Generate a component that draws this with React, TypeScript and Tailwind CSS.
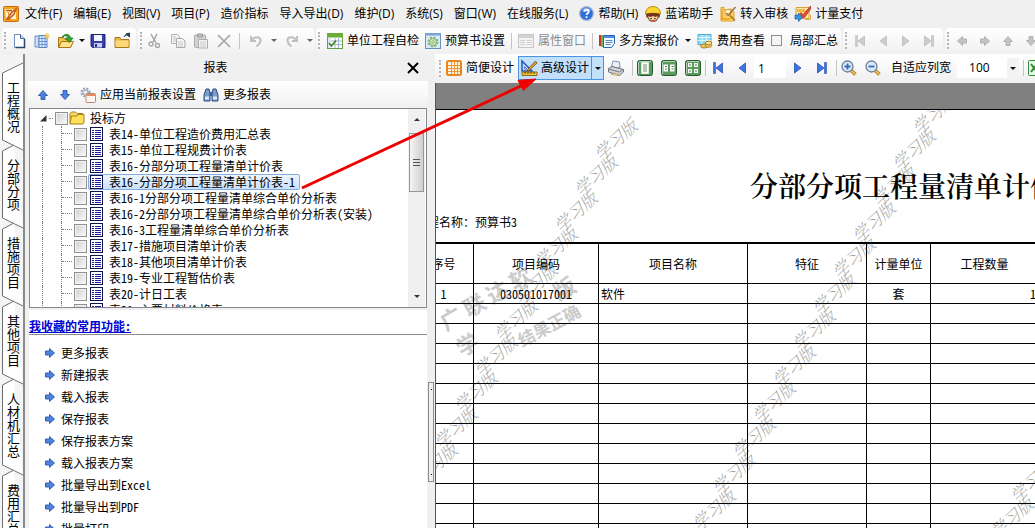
import * as React from "react";
import { clsx } from "clsx";

const menusLeft = ["文件(F)", "编辑(E)", "视图(V)", "项目(P)", "造价指标", "导入导出(D)", "维护(D)", "系统(S)", "窗口(W)", "在线服务(L)"];

const sideTabs = ["工程概况", "分部分项", "措施项目", "其他项目", "人材机汇总", "费用汇总"];

const reports = [
  "表14-单位工程造价费用汇总表",
  "表15-单位工程规费计价表",
  "表16-分部分项工程量清单计价表",
  "表16-分部分项工程量清单计价表-1",
  "表16-1分部分项工程量清单综合单价分析表",
  "表16-2分部分项工程量清单综合单价分析表(安装)",
  "表16-3工程量清单综合单价分析表",
  "表17-措施项目清单计价表",
  "表18-其他项目清单计价表",
  "表19-专业工程暂估价表",
  "表20-计日工表",
  "表21-主要材料价格表",
];

const favorites = ["更多报表", "新建报表", "载入报表", "保存报表", "保存报表方案", "载入报表方案", "批量导出到Excel", "批量导出到PDF", "批量打印"];

// Each run of stamps goes down-left across the sheet: start point and count
const stampRuns = [
  { x: 602, y: 151, count: 10 },
  { x: 920, y: 125, count: 12 },
  { x: 1018, y: 493, count: 2 },
];

interface IconProps {
  children: React.ReactNode;
  className?: string;
  box?: string;
}

function Icon({ children, className = "size-4", box = "0 0 16 16" }: IconProps) {
  return (
    <svg viewBox={box} className={clsx("shrink-0 overflow-visible", className)} fill="none" aria-hidden="true">
      {children}
    </svg>
  );
}

const AppIcon = () => (
  <Icon>
    <rect x=".5" y=".5" width="15" height="15" rx="1" fill="#f6a81c" stroke="#c96a10" />
    <path d="M2 3h8l3 2v8H3z" fill="#fff3d6" />
    <path d="M3 4.500h6M4 13l5-7 4-3-2 5-5 5z" stroke="#c2540f" strokeWidth="1.500" />
    <path d="M5 6l2 6M11 3l3 1" stroke="#d97b13" />
  </Icon>
);

const NewIcon = () => (
  <Icon>
    <path d="M3.500 1.500h6l4 4v9h-10z" fill="#fdfeff" stroke="#6f8fb8" />
    <path d="M13.500 6v8.500h-9" stroke="#27476f" strokeWidth="1.500" />
    <path d="M9.500 1.500v4h4" fill="#c4d8f0" stroke="#466b98" />
  </Icon>
);

const NewBookIcon = () => (
  <Icon>
    <path d="M1 3h4v11H1z" fill="#cfe0f7" stroke="#6d8ec4" />
    <path d="M5 2.500h8v12H5z" fill="#e4effd" stroke="#5c83c3" />
    <path d="M5 5.500h8M5 8.500h8M5 11.500h8M8 3v11M11 3v11" stroke="#6f95d2" />
    <path d="M13 0v6M10 3h6M11 1l4 4M15 1l-4 4" stroke="#f4c543" />
  </Icon>
);

const OpenIcon = () => (
  <Icon>
    <path d="M.5 14V4.500h5l1.500 2h6V14z" fill="#f2c14c" stroke="#a8781d" />
    <path d="M.5 14.500l3-6h12l-3 6z" fill="#ffe28c" stroke="#a8781d" />
    <path d="M4 4.500C6 0 12 .5 12.500 5H15l-3.800 4.500L7.500 5H10C9.500 2.500 6.500 2 4 4.500z" fill="#35a632" stroke="#18701c" strokeWidth=".7" />
  </Icon>
);

const SaveIcon = () => (
  <Icon>
    <path d="M1 1.500h14v13H2.500L1 13z" fill="#3a3fae" stroke="#20246f" />
    <path d="M4 2h8v6H4z" fill="#f3f5ff" />
    <path d="M4 10h8v4.500H4z" fill="#c9cdee" />
    <path d="M5 11h2v3H5z" fill="#2b2f8c" />
  </Icon>
);

const FolderOutIcon = () => (
  <Icon>
    <path d="M1 14.500v-10h5l1 2h8v8z" fill="#e9b545" stroke="#a77719" />
    <path d="M1.500 14V7.500h13V14z" fill="#ffd67a" />
    <path d="M10 4c1-2 2-3 5-3M15.500 0v4L12 1z" stroke="#2d3d55" fill="#2d3d55" />
  </Icon>
);

const CutIcon = () => (
  <Icon>
    <path d="M4 1l5 9M10 1L6 9" stroke="#a5a5a5" strokeWidth="1.500" />
    <circle cx="4" cy="11" r="2" stroke="#a5a5a5" strokeWidth="1.300" />
    <circle cx="10.500" cy="12.500" r="2" stroke="#a5a5a5" strokeWidth="1.300" />
  </Icon>
);

const CopyIcon = () => (
  <Icon>
    <path d="M1.500 1.500h6l2 2v7h-8z" fill="#f1f1f1" stroke="#b4b4b4" />
    <path d="M6.500 5.500h6l2.500 2.500v6.500H6.500z" fill="#f6f6f6" stroke="#a9a9a9" />
    <path d="M8 9h5M8 11h5M8 13h5M3 4h3M3 6h3M3 8h3" stroke="#c6c6c6" />
  </Icon>
);

const PasteIcon = () => (
  <Icon>
    <rect x="1.500" y="2" width="11" height="12.500" rx="1" fill="#d3d3d3" stroke="#ababab" />
    <path d="M4.500 1h5v3h-5z" fill="#bdbdbd" stroke="#a0a0a0" />
    <path d="M5.500 6.500h9v8.500h-9z" fill="#f4f4f4" stroke="#ababab" />
    <path d="M7 9h6M7 11h6M7 13h6" stroke="#c9c9c9" />
  </Icon>
);

const DeleteIcon = () => (
  <Icon>
    <path d="M2 2l12 12M14 2L2 14" stroke="#a4a4a4" strokeWidth="1.600" />
  </Icon>
);

const UndoIcon = ({ flip = false }: { flip?: boolean }) => (
  <Icon className={flip ? "size-4 -scale-x-100" : "size-4"}>
    <path d="M3 3v5h5" stroke="#bcbcbc" strokeWidth="1.800" />
    <path d="M3.500 7.500C6 3.500 12 3 12.500 7c.2 2.500-1.500 4.500-4 6.500" stroke="#c1c1c1" strokeWidth="2.200" />
  </Icon>
);

const CheckTableIcon = () => (
  <Icon>
    <rect x=".5" y=".5" width="15" height="15" fill="#fff" stroke="#6a9a45" />
    <path d="M0 0h16v4.500H0z" fill="#6cae35" />
    <path d="M1 8h14M1 11.500h14M8 5v10M11.500 5v10" stroke="#9db6cf" />
    <path d="M1 5h3v10H1z" fill="#dce8f4" />
    <path d="M2 10l2.500 3L9 7.500" stroke="#3f8a1c" strokeWidth="1.700" />
  </Icon>
);

const GearPageIcon = () => (
  <Icon>
    <rect x=".5" y=".5" width="15" height="15" fill="#dbeafb" stroke="#6b90bd" />
    <path d="M0 0h16v2.500H0z" fill="#7ba2d2" />
    <circle cx="8" cy="9" r="4.500" stroke="#86b46c" strokeWidth="2" strokeDasharray="2.200 1.300" />
    <circle cx="8" cy="9" r="3.400" fill="#d8efc8" stroke="#86b46c" />
    <circle cx="8" cy="9" r="1.300" fill="#fff" stroke="#86b46c" />
  </Icon>
);

const PropsIcon = () => (
  <Icon>
    <rect x=".5" y="1.500" width="15" height="13" fill="#f3f3f3" stroke="#c6c6c6" />
    <path d="M1 2h14v3H1z" fill="#d2d2d2" />
    <path d="M2 7.500h5M2 9.500h5M2 11.500h5M8.500 7.500H14M8.500 9.500H14M8.500 11.500h5.500" stroke="#d0d0d0" />
  </Icon>
);

const PlansIcon = () => (
  <Icon>
    <path d="M1 2v11" stroke="#c83322" strokeWidth="2" />
    <path d="M3 2v12" stroke="#45a53b" strokeWidth="1.600" />
    <path d="M4.500 2.500h11v8l-3 4h-8z" fill="#f2f8ff" stroke="#2563bd" />
    <path d="M5 3h10v2H5z" fill="#4e8fe3" />
    <path d="M6.500 7.500h7M6.500 9.500h7M6.500 11.500h5" stroke="#5e86b9" />
  </Icon>
);

const CostIcon = () => (
  <Icon>
    <path d="M1 1.500h13v10H1z" fill="#8fdcf4" stroke="#4fa7cb" />
    <path d="M1 4.500h13M1 7.500h13M5 2v9M9.500 2v9" stroke="#d8f4fc" />
    <ellipse cx="7" cy="13" rx="3.500" ry="2" fill="#f0c75c" stroke="#a98227" />
    <ellipse cx="11.500" cy="12.500" rx="3.300" ry="1.800" fill="#f0c75c" stroke="#a98227" />
    <ellipse cx="11.500" cy="10" rx="3.300" ry="1.800" fill="#ffe08a" stroke="#a98227" />
  </Icon>
);

const HelpIcon = () => (
  <Icon className="size-[15px]">
    <circle cx="8" cy="8" r="7.300" fill="#2e6fd9" stroke="#a3b7d6" strokeWidth="1.400" />
    <path d="M3 5a5.500 5.500 0 0 1 10 0c-3 2-7 2-10 0z" fill="#6fa2f0" />
    <path d="M5.700 6.200C5.700 3 10.300 3 10.300 6c0 1.800-2.200 1.800-2.200 3.600M8 11v1.800" stroke="#fff" strokeWidth="1.900" />
  </Icon>
);

const HelperIcon = () => (
  <Icon>
    <path d="M3 8h10v4l-2 3H5l-2-3z" fill="#f7cfa2" stroke="#77451c" />
    <path d="M.5 8c0-10 15-10 15 0-4-1-11-1-15 0z" fill="#ffd42c" stroke="#b68712" />
    <path d="M1 8c4-1.500 10-1.500 14 0l-.5 4-2-2-2 1-2.500-1-2.500 1-2-1-2 2z" fill="#74371a" />
    <path d="M6 12v1.300M10 12v1.300" stroke="#2e1b10" strokeWidth="1.300" />
    <path d="M6.500 15h3" stroke="#d0432c" strokeWidth="1.500" />
  </Icon>
);

const AuditIcon = () => (
  <Icon>
    <path d="M1 1.500h3V4l7-1 3 3v9H1z" fill="#ffd559" stroke="#dfa02a" />
    <path d="M2 12c4 2 8 1 11-1M2 3v11" stroke="#ef9f27" strokeWidth="1.500" />
    <circle cx="8" cy="6.500" r="3.300" fill="#fff4cf" stroke="#d0a03b" />
    <path d="M15.500 1L8.500 9 6 7M10 9.500l5 5" stroke="#9a7440" strokeWidth="1.500" />
  </Icon>
);

const PayIcon = () => (
  <Icon>
    <path d="M1 1.500h13v11H1z" fill="#ffe9b5" stroke="#d9a13d" />
    <path d="M2 3h8v3H2z" fill="#f4b54b" />
    <path d="M15.500 0L8 8.500l-2-2-1 1L7.500 12 10 11l5.500-8z" fill="#e3502c" stroke="#a32b12" strokeWidth=".7" />
    <path d="M10 13.500h5.500V9" stroke="#e1aa53" />
    <path d="M0 9h3.500V7l4 4.500-4 4V13H0z" fill="#3c93df" stroke="#1c5e9f" strokeWidth=".7" />
  </Icon>
);

const GridIcon = () => (
  <Icon>
    <rect x="1" y="1" width="14" height="14" rx="1.500" fill="#fff4e2" stroke="#e88722" strokeWidth="2" />
    <path d="M2 5.500h12M2 8.500h12M2 11.500h12M5.500 2v12M8.500 2v12M11.500 2v12" stroke="#eb9638" />
  </Icon>
);

const DesignIcon = () => (
  <Icon>
    <path d="M1 1v10h10z" fill="#cfe0ff" stroke="#2a55bb" strokeWidth="1.500" />
    <path d="M3.500 6.500v2.500H6z" fill="#fff" stroke="#2a55bb" strokeWidth=".7" />
    <path d="M14.500 1L7 9l-1 2.500L8.500 10 16 3z" fill="#e1a13d" stroke="#6f4a16" strokeWidth=".8" />
    <path d="M1 12h15v3.500H1z" fill="#f2c639" stroke="#8b6a12" />
    <path d="M4 12v2M7 12v2M10 12v2M13 12v2" stroke="#5d470b" />
  </Icon>
);

const PrinterIcon = () => (
  <Icon>
    <path d="M3.500 7L5 1l6.500 1L12 8z" fill="#e9f1fb" stroke="#8393a6" />
    <path d="M.5 8.500L4 6.500l11.500 3V12l-4 3.500L.5 12z" fill="#d4d6da" stroke="#70757d" />
    <path d="M.5 9l11 3 4-2.500" stroke="#70757d" />
    <path d="M3 14l3-1 5 1.500-2 1z" fill="#fff4c4" stroke="#9b8a4a" strokeWidth=".7" />
  </Icon>
);

const GreenPage = ({ children }: { children: React.ReactNode }) => (
  <Icon>
    <rect x=".5" y=".5" width="15" height="15" rx="2" fill="#5b9a5e" stroke="#28582c" />
    <path d="M1.500 14V2.500l1-1H14" stroke="#b4d8b4" />
    {children}
  </Icon>
);

const ZoomIcon = ({ plus = false }: { plus?: boolean }) => (
  <Icon>
    <path d="M9.500 10l5 4.500" stroke="#8a6420" strokeWidth="3.400" />
    <path d="M10 10.500l4.500 4" stroke="#f2c443" strokeWidth="2" />
    <circle cx="6.500" cy="6.500" r="5.500" fill="#d7e8fb" stroke="#6f7f95" strokeWidth="1.300" />
    <path d={plus ? "M3.500 6.500h6M6.500 3.500v6" : "M3.500 6.500h6"} stroke="#3a6bb4" strokeWidth="1.800" />
  </Icon>
);

const ApplyIcon = () => (
  <Icon>
    <circle cx="5.500" cy="5.500" r="4" stroke="#98a6b8" strokeWidth="2.200" strokeDasharray="2 1.200" />
    <circle cx="5.500" cy="5.500" r="2.500" fill="#edf1f6" stroke="#8b9aad" />
    <rect x="6" y="6.500" width="9.500" height="9" rx="1" fill="#fdf6f0" stroke="#b98a72" />
    <path d="M6.500 7h8.500v2H6.500z" fill="#e78a5a" />
  </Icon>
);

const BinocularsIcon = () => (
  <Icon>
    <path d="M3 2h3l1 4v8H1V8zM13 2h-3L9 6v8h6V8z" fill="#7d9cc7" stroke="#2a4d84" />
    <path d="M6.500 5h3v4h-3z" fill="#3d649f" />
    <path d="M2 9.500h4v3H2zM10 9.500h4v3h-4z" fill="#dce8f8" />
  </Icon>
);

const FolderIcon = () => (
  <Icon className="h-3.5 w-4" box="0 0 16 14">
    <path d="M1 12.500V2.500L2.500 1h4L8 2.500h5.500v3" fill="#f7d768" stroke="#a98112" />
    <path d="M1 13l1.500-8H8l1-1.500h6V11l-1 2z" fill="#ffdf5e" stroke="#a98112" />
  </Icon>
);

const SheetIcon = () => (
  <Icon className="h-3.5 w-[13px]" box="0 0 13 14">
    <rect x=".5" y=".5" width="12" height="13" fill="#fff" stroke="#10104e" />
    <path d="M2 3.500h2M2 5.500h2M2 7.500h2M2 9.500h2M2 11.500h2M5 3.500h6M5 5.500h6M5 7.500h6M5 9.500h6M5 11.500h6" stroke="#20209a" />
  </Icon>
);

const turns = { right: "", left: "rotate-180", up: "-rotate-90", down: "rotate-90" };

// Block arrow used by the tree toolbar, the favorites list and the greyed move buttons
function BlockArrow({ dir, muted = false }: { dir: keyof typeof turns; muted?: boolean }) {
  return (
    <Icon className={clsx("size-2.5", turns[dir])} box="0 0 10 10">
      <path
        d="M.5 3h4V.5L9.500 5l-5 4.500V7h-4z"
        fill={muted ? "#c4c4c4" : "#4f83e0"}
        stroke={muted ? "#adadad" : "#2b55a8"}
        strokeWidth=".9"
      />
    </Icon>
  );
}

function NavArrow({ dir, stop = false, muted = false }: { dir: "left" | "right"; stop?: boolean; muted?: boolean }) {
  const color = muted ? "#cccccc" : "#3f74e0";
  const edge = muted ? "#bdbdbd" : "#2450b0";
  return (
    <Icon className={clsx("h-3 w-2.5", turns[dir])} box="0 0 10 12">
      <path d={stop ? "M.5 1L7 6 .5 11z" : "M1.500 1L8 6l-6.500 5z"} fill={color} stroke={edge} strokeWidth=".8" />
      {stop && <path d="M7.500.5h2v11h-2z" fill={color} stroke={edge} strokeWidth=".6" />}
    </Icon>
  );
}

const Caret = ({ color = "#111" }: { color?: string }) => (
  <Icon className="h-[3px] w-[6px]" box="0 0 6 3">
    <path d="M0 0h6L3 3z" fill={color} />
  </Icon>
);

const Grip = () => <span className="h-[17px] w-[3px] shrink-0 border-l-2 border-dotted border-[#b5b5b5]" />;
const Sep = () => <span className="h-4 w-px shrink-0 bg-[#c4c4c4]" />;

interface ToolProps {
  label: string;
  width?: string;
  children: React.ReactNode;
}

function Tool({ label, width = "w-6", children }: ToolProps) {
  return (
    <button type="button" aria-label={label} className={clsx("flex h-6 shrink-0 items-center justify-center", width)}>
      {children}
    </button>
  );
}

function TextTool({ icon, children, className = "" }: { icon?: React.ReactNode; children: React.ReactNode; className?: string }) {
  return (
    <button type="button" className={clsx("flex shrink-0 items-center gap-1 whitespace-nowrap", className)}>
      {icon}
      {children}
    </button>
  );
}

function ToolGroup({ children, className = "" }: { children: React.ReactNode; className?: string }) {
  return (
    <div className={clsx("flex h-[26px] shrink-0 items-center rounded bg-linear-to-b from-white to-[#f0f0f0] pl-0.5", className)}>
      {children}
    </div>
  );
}

function MenuBar() {
  return (
    <nav className="flex h-[27px] shrink-0 items-center gap-[11px] whitespace-nowrap pl-[3px]">
      <div className="flex items-center gap-1.5">
        <AppIcon />
        <button type="button">{menusLeft[0]}</button>
      </div>
      {menusLeft.slice(1).map((m) => (
        <button type="button" key={m}>{m}</button>
      ))}
      <div className="flex items-center gap-[7px]">
        <TextTool icon={<HelpIcon />}>帮助(H)</TextTool>
        <TextTool icon={<HelperIcon />}>蓝诺助手</TextTool>
        <TextTool icon={<AuditIcon />}>转入审核</TextTool>
        <TextTool icon={<PayIcon />}>计量支付</TextTool>
      </div>
    </nav>
  );
}

function MainToolbar() {
  return (
    <div className="flex h-[27px] shrink-0 items-center gap-0.5 pl-0.5">
      <ToolGroup className="w-[134px]">
        <Grip />
        <Tool label="新建" width="w-[23px]"><NewIcon /></Tool>
        <Tool label="新建项目"><NewBookIcon /></Tool>
        <Tool label="打开"><OpenIcon /></Tool>
        <Tool label="最近文件" width="w-2"><Caret /></Tool>
        <Tool label="保存"><SaveIcon /></Tool>
        <Tool label="另存为"><FolderOutIcon /></Tool>
      </ToolGroup>
      <ToolGroup className="w-[176px]">
        <Grip />
        <Tool label="剪切" width="w-[23px]"><CutIcon /></Tool>
        <Tool label="复制" width="w-[23px]"><CopyIcon /></Tool>
        <Tool label="粘贴" width="w-[23px]"><PasteIcon /></Tool>
        <Tool label="删除" width="w-[23px]"><DeleteIcon /></Tool>
        <span className="mx-1 flex"><Sep /></span>
        <Tool label="撤销"><UndoIcon /></Tool>
        <Tool label="撤销列表" width="w-3"><Caret color="#666" /></Tool>
        <Tool label="恢复"><UndoIcon flip /></Tool>
        <Tool label="恢复列表" width="w-3"><Caret color="#666" /></Tool>
      </ToolGroup>
      <ToolGroup className="w-[525px] gap-1.5">
        <Grip />
        <TextTool icon={<CheckTableIcon />}>单位工程自检</TextTool>
        <TextTool icon={<GearPageIcon />}>预算书设置</TextTool>
        <Sep />
        <TextTool icon={<PropsIcon />} className="text-[#8d8d8d]">属性窗口</TextTool>
        <Sep />
        <TextTool icon={<PlansIcon />}>
          多方案报价
          <span className="flex w-2 justify-end"><Caret /></span>
        </TextTool>
        <TextTool icon={<CostIcon />}>费用查看</TextTool>
        <label className="flex items-center gap-2 whitespace-nowrap">
          <input type="checkbox" className="size-[11px] appearance-none border border-[#8e8f8f] bg-[#f4f4f4]" />
          局部汇总
        </label>
      </ToolGroup>
      <ToolGroup className="w-[100px]">
        <Grip />
        <Tool label="首条" width="w-[23px]"><NavArrow dir="left" stop muted /></Tool>
        <Tool label="上一条" width="w-[23px]"><NavArrow dir="left" muted /></Tool>
        <Tool label="下一条" width="w-[23px]"><NavArrow dir="right" muted /></Tool>
        <Tool label="末条" width="w-[23px]"><NavArrow dir="right" stop muted /></Tool>
      </ToolGroup>
      <ToolGroup>
        <Grip />
        <Tool label="左移" width="w-[23px]"><BlockArrow dir="left" muted /></Tool>
        <Tool label="右移" width="w-[23px]"><BlockArrow dir="right" muted /></Tool>
        <Tool label="上移" width="w-[23px]"><BlockArrow dir="up" muted /></Tool>
        <Tool label="下移" width="w-[23px]"><BlockArrow dir="down" muted /></Tool>
      </ToolGroup>
    </div>
  );
}

function SideTab({ name, first }: { name: string; first: boolean }) {
  const h = name.length * 13 + 26;
  return (
    <button type="button" className="relative flex w-full flex-col items-center py-[13px] pl-1 text-[13px] leading-[13px]">
      <svg className="absolute left-0 top-0 h-full w-full overflow-visible" fill="#fff" stroke="#6e6e6e" aria-hidden="true">
        <path d={`M${first ? "23 -4" : "14 0"} L2.500 6 V${h - 5} L23 ${h + 5}`} />
      </svg>
      {[...name].map((c, i) => (
        <span key={i} className="relative">{c}</span>
      ))}
    </button>
  );
}

const boxStyle = "size-[13px] shrink-0 appearance-none border border-[#8e8f8f] bg-linear-to-br from-[#cfcfcf] to-[#fbfbfb] shadow-[inset_0_0_0_1px_#f4f4f4]";

function ReportTree() {
  const [selected, setSelected] = React.useState(3);
  return (
    <div className="mx-px flex h-[200px] shrink-0 border border-[#828790] bg-white">
      <ul className="min-w-0 flex-1 overflow-hidden whitespace-nowrap pt-px font-['Noto_Sans_Mono_CJK_SC','Noto_Sans_CJK_SC',sans-serif]">
        <li className="flex h-4 items-center pl-2.5">
          <Icon className="size-[7px]" box="0 0 7 7"><path d="M6.500 0v6.500H0z" fill="#333" /></Icon>
          <span className="mx-0.5 w-1 border-b border-dotted border-[#808080]" />
          <input id="root" type="checkbox" className={boxStyle} />
          <label htmlFor="root" className="flex items-center gap-[5px] pl-px"><FolderIcon />投标方</label>
        </li>
        {reports.map((name, i) => (
          <li key={name} className="flex h-4 items-center">
            <span className="ml-3 h-4 w-[19px] border-l border-dotted border-[#808080]" />
            <span className="mr-0.5 h-4 w-[11px] border-l border-dotted border-[#808080]">
              <span className="block h-2 border-b border-dotted border-[#808080]" />
            </span>
            <input type="checkbox" aria-label={name} className={boxStyle} />
            <button
              type="button"
              onClick={() => setSelected(i)}
              className={clsx(
                "ml-px flex h-4 items-center gap-1.5 rounded-xs border pl-px pr-1",
                i === selected ? "border-[#84acdd] bg-linear-to-b from-[#eef5fe] to-[#cbe0fb]" : "border-transparent"
              )}
            >
              <SheetIcon />
              {name}
            </button>
          </li>
        ))}
      </ul>
      <div className="mr-px flex w-[17px] shrink-0 flex-col items-center bg-[#f0f0f0] py-[9px]">
        <Icon className="h-[3px] w-[6px] rotate-180" box="0 0 6 3"><path d="M0 0h6L3 3z" fill="#333" /></Icon>
        <div className="mt-3 flex h-[59px] w-[15px] flex-col items-center justify-center gap-0.5 border border-[#979797] bg-linear-to-r from-[#f5f5f5] to-[#cfcfcf]">
          <span className="h-px w-[7px] bg-[#555]" />
          <span className="h-px w-[7px] bg-[#555]" />
          <span className="h-px w-[7px] bg-[#555]" />
        </div>
        <span className="flex-1" />
        <Caret color="#333" />
      </div>
    </div>
  );
}

function ReportDock() {
  return (
    <aside className="flex w-[400px] shrink-0 flex-col">
      <header className="flex h-[27px] shrink-0 items-center pr-[9px]">
        <h2 className="flex-1 pr-1 text-center">报表</h2>
        <button type="button" aria-label="关闭">
          <Icon className="size-3" box="0 0 12 12"><path d="M1 1l10 10M11 1L1 11" stroke="#000" strokeWidth="2" /></Icon>
        </button>
      </header>
      <div className="flex h-[27px] shrink-0 items-center bg-linear-to-b from-white to-[#f0f0f0] pl-1">
        <Tool label="上移报表" width="w-[22px]"><BlockArrow dir="up" /></Tool>
        <Tool label="下移报表" width="w-[22px]"><BlockArrow dir="down" /></Tool>
        <div className="flex gap-[7px] pl-1">
          <TextTool icon={<ApplyIcon />}>应用当前报表设置</TextTool>
          <TextTool icon={<BinocularsIcon />}>更多报表</TextTool>
        </div>
      </div>
      <ReportTree />
      <section className="mx-px mt-0.5 min-h-0 flex-1 overflow-hidden bg-white pt-2 font-['Noto_Sans_Mono_CJK_SC','Noto_Sans_CJK_SC',sans-serif]">
        <h3 className="border-b border-[#8c8c8c] leading-4 font-bold text-[#0000d4] underline">我收藏的常用功能:</h3>
        <ul className="pt-[7px]">
          {favorites.map((f) => (
            <li key={f} className="flex h-[22px] items-center pl-4">
              <a href="#" className="flex items-center gap-1.5">
                <BlockArrow dir="right" />
                {f}
              </a>
            </li>
          ))}
        </ul>
      </section>
    </aside>
  );
}

function ViewToolbar() {
  return (
    <div className="flex h-7 shrink-0 items-center bg-linear-to-b from-white to-[#f0f0f0] pl-1">
      <Grip />
      <TextTool icon={<GridIcon />} className="ml-1">简便设计</TextTool>
      <div className="ml-1 flex h-6 shrink-0 items-center border border-[#4a94e6] bg-[#c2dffb]">
        <TextTool icon={<DesignIcon />} className="px-0.5">高级设计</TextTool>
        <button type="button" aria-label="高级设计选项" className="flex h-full w-3 items-center justify-center border-l border-[#4a94e6]">
          <Caret />
        </button>
      </div>
      <Tool label="打印"><PrinterIcon /></Tool>
      <span className="ml-1 flex"><Sep /></span>
      <Tool label="单页">
        <GreenPage><path d="M4.500 2.500h7v11h-7z" fill="#fff" stroke="#dfeadf" /><path d="M6 5h4M6 7h4M6 9h4M6 11h4" stroke="#6c8f6c" /></GreenPage>
      </Tool>
      <Tool label="双页">
        <GreenPage><path d="M2.500 4.500h4.500v7H2.500zM9 4.500h4.500v7H9z" fill="#fff" /><path d="M4 6.500h2M4 9h2M10.500 6.500h2M10.500 9h2" stroke="#4c7a4c" /></GreenPage>
      </Tool>
      <Tool label="多页">
        <GreenPage><path d="M3 3h4v4H3zM9 3h4v4H9zM3 9h4v4H3zM9 9h4v4H9z" fill="#f1f8f1" /><path d="M4 5h2M10 5h2M4 11h2M10 11h2" stroke="#4c7a4c" /></GreenPage>
      </Tool>
      <Sep />
      <Tool label="首页"><NavArrow dir="left" stop /></Tool>
      <Tool label="上一页"><NavArrow dir="left" /></Tool>
      <input aria-label="页码" defaultValue="1" className="h-5 w-8 shrink-0 bg-white pl-1 outline-none" />
      <Tool label="下一页"><NavArrow dir="right" /></Tool>
      <Tool label="末页"><NavArrow dir="right" stop /></Tool>
      <span className="ml-0.5 flex"><Sep /></span>
      <Tool label="放大"><ZoomIcon plus /></Tool>
      <Tool label="缩小"><ZoomIcon /></Tool>
      <TextTool className="px-1.5">自适应列宽</TextTool>
      <div className="relative flex h-5 w-[62px] shrink-0 items-center bg-white">
        <select aria-label="缩放比例" defaultValue="100" className="h-5 w-full appearance-none pl-3 outline-none">
          <option>100</option>
        </select>
        <span className="pointer-events-none absolute inset-y-0 right-0 flex w-3 items-center justify-center bg-[#f3f3f3]">
          <Caret />
        </span>
      </div>
      <span className="mx-1 flex"><Sep /></span>
      <Tool label="导出Excel" width="w-4">
        <Icon>
          <rect x=".5" y=".5" width="15" height="15" rx="1" fill="#e9f6e6" stroke="#2f8a3c" />
          <path d="M3 4l6 8M9 4l-6 8" stroke="#2f8a3c" strokeWidth="2" />
        </Icon>
      </Tool>
    </div>
  );
}

const stampBase = "absolute origin-center -translate-x-1/2 -translate-y-1/2 whitespace-nowrap";

// Coordinates are window based, the sheet starts at 436,110
function Watermarks() {
  return (
    <div className="pointer-events-none absolute inset-0 overflow-hidden" aria-hidden="true">
      {stampRuns.map((run) =>
        Array.from({ length: run.count }, (_, i) => (
          <span
            key={`${run.x}-${i}`}
            className={clsx(stampBase, "-rotate-[42deg] text-[17px] leading-[17px] font-extralight italic text-[#a0a0a0] font-['Noto_Serif_CJK_SC','Noto_Sans_CJK_SC',serif]")}
            style={{ left: run.x - 436 + 13 - i * 20, top: run.y - 110 - 12 + i * 36 }}
          >
            学习版
          </span>
        ))
      )}
      <span className={clsx(stampBase, "left-[49px] top-[187px] flex w-[102px] -rotate-[30deg] justify-between text-[22px] leading-7 font-bold text-[#cbcbcb]")}>
        {[..."广联达软"].map((c) => (
          <span key={c}>{c}</span>
        ))}
      </span>
      <span className={clsx(stampBase, "left-[79px] top-[205px] flex w-[134px] -rotate-[30deg] justify-between text-[22px] leading-7 font-bold text-[#cbcbcb]")}>
        <span>学</span>
        <span>版</span>
      </span>
      <span className={clsx(stampBase, "left-[113px] top-[215px] -rotate-[28deg] text-[17px] leading-5 font-bold text-[#cbcbcb]")}>结果正确</span>
    </div>
  );
}

const cell = "border-r border-b border-black";

function Sheet() {
  return (
    <div className="relative min-h-0 flex-1 overflow-hidden border-t border-black bg-white font-['Noto_Sans_Mono_CJK_SC','Noto_Sans_CJK_SC',sans-serif]">
      <Watermarks />
      <div className="relative -ml-[22px] w-[1008px]">
        <h1 className="pt-[59px] text-center text-[28px] leading-8 font-semibold font-['Noto_Serif_CJK_SC','Noto_Sans_CJK_SC',serif]">
          分部分项工程量清单计价表
        </h1>
        <p className="pt-3 pb-[11px] pl-px leading-[18px]">工程名称：预算书3</p>
        <table className="w-full table-fixed border-separate border-spacing-0 border-t-2 border-black">
          <colgroup>
            <col className="w-[60px]" />
            <col className="w-[125px]" />
            <col className="w-[149px]" />
            <col className="w-[119px]" />
            <col className="w-[64px]" />
            <col className="w-[108px]" />
            <col />
          </colgroup>
          <thead>
            <tr className="h-10">
              {["序号", "项目编码", "项目名称", "特征", "计量单位", "工程数量", ""].map((h, i) => (
                <th key={i} className={clsx(cell, "p-0 font-normal")}>{h}</th>
              ))}
            </tr>
          </thead>
          <tbody>
            <tr className="h-5 text-center">
              <td className={clsx(cell, "p-0")}>1</td>
              <td className={clsx(cell, "p-0")}>030501017001</td>
              <td className={clsx(cell, "p-0 pl-0.5 text-left")}>软件</td>
              <td className={clsx(cell, "p-0")} />
              <td className={clsx(cell, "p-0")}>套</td>
              <td className={clsx(cell, "p-0 pr-0.5 text-right")}>1</td>
              <td className={clsx(cell, "p-0")} />
            </tr>
            {Array.from({ length: 14 }, (_, r) => (
              <tr key={r} className="h-5">
                {Array.from({ length: 7 }, (_, c) => (
                  <td key={c} className={clsx(cell, "p-0")} />
                ))}
              </tr>
            ))}
          </tbody>
        </table>
      </div>
    </div>
  );
}

export default function App() {
  return (
    <div className="relative flex h-screen flex-col overflow-hidden bg-[#f0f0f0] font-['Open_Sans','Noto_Sans_CJK_SC',sans-serif] text-[12px] leading-4 text-black">
      <MenuBar />
      <MainToolbar />
      <div className="flex min-h-0 flex-1">
        <div className="w-[25px] shrink-0 overflow-hidden border-r-2 border-[#8a8a8a] bg-[#f4f4f4] pt-[13px] font-['Noto_Sans_CJK_SC',sans-serif]">
          {sideTabs.map((t, i) => (
            <SideTab key={t} name={t} first={i === 0} />
          ))}
        </div>
        <div className="w-[3px] shrink-0" />
        <ReportDock />
        <div className="flex w-[7px] shrink-0 flex-col">
          <div className="mt-[328px] flex h-[100px] w-[6px] shrink-0 flex-col items-center justify-between border border-[#8c8c8c] py-1.5">
            <span className="size-px bg-black" />
            <span className="size-px bg-black" />
          </div>
        </div>
        <main className="flex min-w-0 flex-1 flex-col overflow-hidden">
          <ViewToolbar />
          <div className="mt-px flex min-h-0 flex-1 flex-col border-l border-[#555]">
            <div className="h-[26px] shrink-0 bg-[#808080]" />
            <Sheet />
          </div>
        </main>
      </div>
      <svg className="pointer-events-none absolute left-0 top-0 h-full w-full" aria-hidden="true">
        <path d="M302 188L522 85.500" stroke="#ee0000" strokeWidth="3" />
        <path d="M536 79L518 80.500l5.500 10z" fill="#ee0000" stroke="#ee0000" />
      </svg>
    </div>
  );
}
